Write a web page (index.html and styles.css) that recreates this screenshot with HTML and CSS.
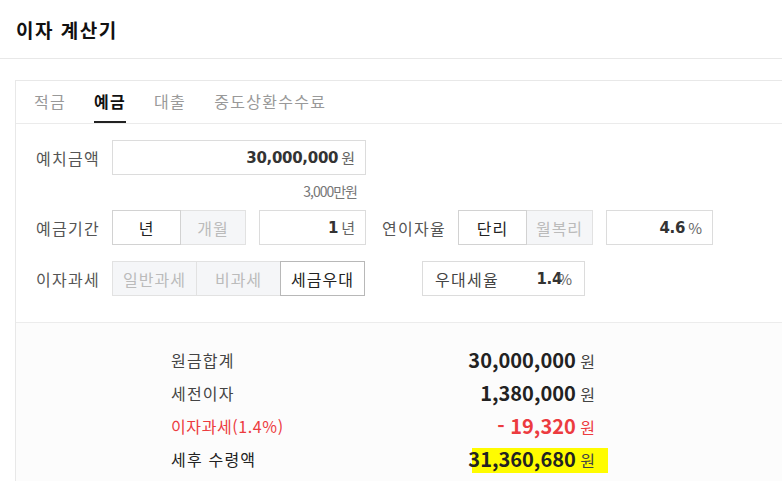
FILE: index.html
```html
<!DOCTYPE html>
<html lang="ko">
<head>
<meta charset="utf-8">
<link rel="stylesheet" href="styles.css">
</head>
<body>
<header class="page-header"><h1 class="page-title">이자 계산기</h1></header>
<section class="card">
  <nav class="tabs">
    <span class="tab">적금</span>
    <span class="tab tab-active">예금</span>
    <span class="tab">대출</span>
    <span class="tab">중도상환수수료</span>
  </nav>
  <div class="form">
    <div class="row">
      <span class="label">예치금액</span>
      <div class="field field-wide"><b class="num">30,000,000</b><span class="unit">원</span></div>
    </div>
    <div class="hint-row"><span class="hint">3,000만원</span></div>
    <div class="row">
      <span class="label">예금기간</span>
      <div class="toggle">
        <span class="opt opt-on w69">년</span>
        <span class="opt w65">개월</span>
      </div>
      <div class="field field-sm"><b class="num">1</b><span class="unit">년</span></div>
      <span class="label label-mid">연이자율</span>
      <div class="toggle">
        <span class="opt opt-on w68">단리</span>
        <span class="opt w66">월복리</span>
      </div>
      <div class="field field-sm"><b class="num">4.6</b><span class="unit">%</span></div>
    </div>
    <div class="row row-3">
      <span class="label">이자과세</span>
      <div class="toggle">
        <span class="opt w84">일반과세</span>
        <span class="opt w84">비과세</span>
        <span class="opt opt-on opt-strong w85">세금우대</span>
      </div>
      <div class="field field-rate"><span class="rate-label">우대세율</span><b class="num">1.4</b><span class="unit unit-tight">%</span></div>
    </div>
  </div>
  <div class="result">
    <div class="res-grid">
      <span class="res-label">원금합계</span><span class="res-val"><b>30,000,000</b> 원</span>
      <span class="res-label">세전이자</span><span class="res-val"><b>1,380,000</b> 원</span>
      <span class="res-label red tight">이자과세(1.4%)</span><span class="res-val red"><b>- 19,320</b> 원</span>
      <span class="res-label dark">세후 수령액</span><span class="res-val"><span class="hl"><b>31,360,680</b> 원</span></span>
    </div>
  </div>
</section>
</body>
</html>
```

FILE: styles.css
```css
html, body {
  margin: 0;
  padding: 0;
  background: #fff;
  overflow: hidden;
  width: 782px;
  height: 481px;
}
body {
  font-family: "Noto Sans CJK KR", "Noto Sans", sans-serif;
  color: #333;
}
.page-header {
  height: 59px;
  border-bottom: 1px solid #e8e8e8;
  box-sizing: border-box;
  display: flex;
  align-items: center;
  padding-left: 16px;
}
.page-title {
  margin: 0;
  font-size: 19px;
  font-weight: 700;
  color: #111;
  letter-spacing: 1.5px;
}
.card {
  margin: 21px -20px 0 15px;
  border: 1px solid #e8e8e8;
  border-bottom: none;
  height: 401px;
  box-sizing: border-box;
  display: flex;
  flex-direction: column;
}
.tabs {
  display: flex;
  gap: 28px;
  height: 43px;
  box-sizing: border-box;
  padding-left: 18px;
  border-bottom: 1px solid #ebebeb;
}
.tab {
  font-size: 16px;
  color: #999;
  line-height: 40px;
  border-bottom: 2px solid transparent;
  letter-spacing: 1.3px;
}
.tab-active {
  color: #111;
  font-weight: 700;
  border-bottom-color: #222;
}
.form {
  padding: 16px 0 26px 20px;
  border-bottom: 1px solid #ececec;
}
.row {
  display: flex;
  align-items: center;
  height: 35px;
}
.row-3 { margin-top: 16px; }
.label {
  width: 76px;
  font-size: 16px;
  color: #555;
  letter-spacing: 1.3px;
}
.label-mid {
  width: 76px;
  margin-left: 16px;
}
.field {
  height: 35px;
  box-sizing: border-box;
  border: 1px solid #dcdcdc;
  background: #fff;
  display: flex;
  align-items: center;
  justify-content: flex-end;
  padding-right: 10px;
}
.field-wide { width: 254px; }
.field-sm { width: 107px; margin-left: 13px; }
.field-rate {
  width: 163px;
  margin-left: 57px;
  justify-content: flex-start;
  padding-left: 12px;
  padding-right: 0;
}
.rate-label {
  font-size: 16px;
  color: #444;
  flex: 1;
  letter-spacing: 1.3px;
}
.num {
  font-family: "DejaVu Sans", Verdana, sans-serif;
  font-weight: 700;
  font-size: 15px;
  color: #333;
  letter-spacing: -0.3px;
}
.unit {
  font-size: 15px;
  color: #666;
  margin-left: 3px;
}
.unit-tight {
  margin-left: -4px;
  margin-right: 12px;
}
.hint-row {
  width: 321px;
  height: 35px;
  display: flex;
  justify-content: flex-end;
}
.hint {
  font-size: 14px;
  color: #777;
  letter-spacing: -1px;
  line-height: 33px;
}
.toggle {
  display: flex;
  height: 35px;
}
.opt {
  box-sizing: border-box;
  height: 35px;
  display: flex;
  align-items: center;
  justify-content: center;
  font-size: 16px;
  color: #bbb;
  background: #f5f6f8;
  border: 1px solid #e2e2e2;
  margin-left: -1px;
  letter-spacing: 1px;
}
.opt:first-child { margin-left: 0; }
.opt-on {
  background: #fff;
  color: #222;
  border-color: #d2d2d2;
  position: relative;
  z-index: 1;
}
.opt-strong { border-color: #b8b8b8; }
.w69 { width: 69px; }
.w65 { width: 66px; }
.w68 { width: 69px; }
.w66 { width: 67px; }
.w84 { width: 85px; }
.w85 { width: 85px; }
.result {
  background: #fcfcfc;
  flex: 1;
  padding: 20px 0 0 155px;
}
.res-grid {
  display: grid;
  grid-template-columns: 200px 224px;
  grid-auto-rows: 33px;
  align-items: center;
}
.res-label {
  font-size: 16px;
  color: #444;
  letter-spacing: 1.2px;
}
.res-label.tight { letter-spacing: 0.6px; }
.res-label.dark { color: #222; }
.res-val {
  text-align: right;
  font-size: 16px;
  color: #444;
}
.res-val b {
  font-size: 20px;
  font-weight: 700;
  color: #222;
}
.red, .res-val.red, .res-val.red b { color: #ec3b3f; }
.hl {
  background-image: linear-gradient(#fffc00, #fffc00);
  background-repeat: no-repeat;
  background-size: calc(100% - 4px) 100%;
  background-position: right top;
  padding: 0 13px 1px 0;
  margin-right: -13px;
}
```
